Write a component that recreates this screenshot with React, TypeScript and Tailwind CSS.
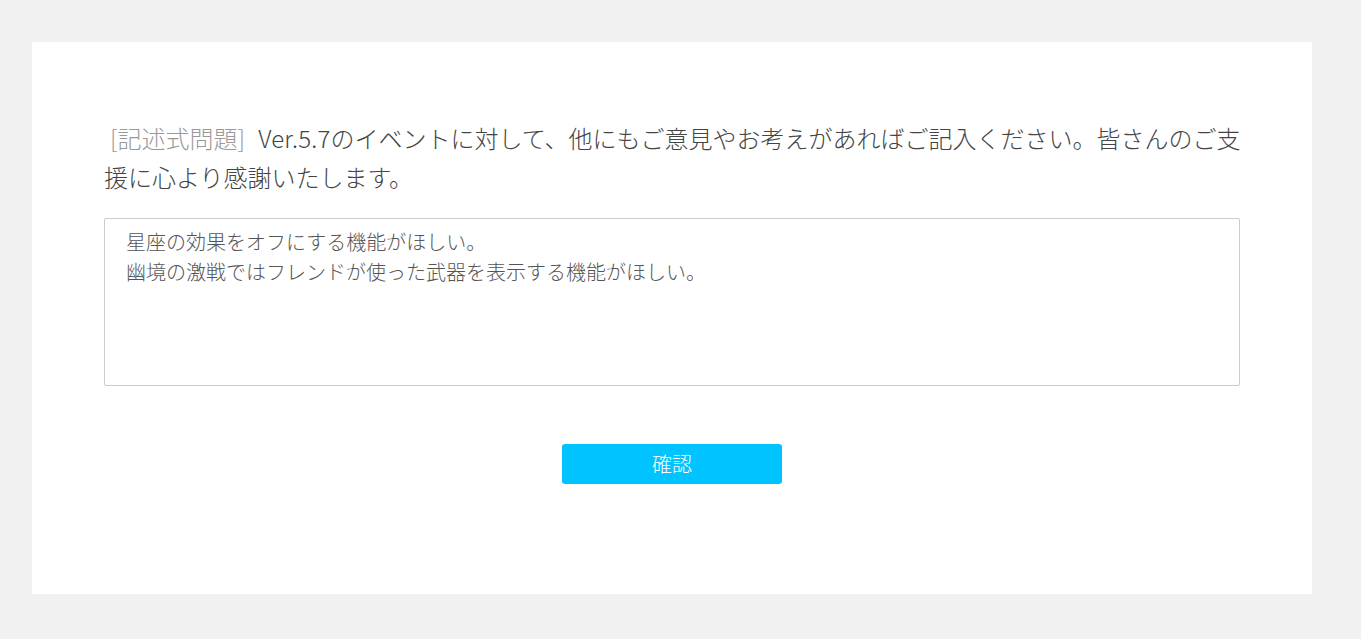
const jp = "font-['Noto_Sans_CJK_JP','Noto_Sans',sans-serif]";

export default function App() {
  return (
    <div className={`h-screen overflow-hidden bg-[#f1f1f1] pt-[42px] pl-[32px] ${jp}`}>
      <div className="flex h-[552px] w-[1280px] flex-col bg-white px-[72px] pt-[76px]">
        <p className="-mr-[10px] text-[24px] leading-[39px] font-light text-[#444]">
          <span className="ml-[6px] text-[#999]">[記述式問題]</span>
          <span className="ml-[13px] tracking-[0.2px]">Ver.5.7</span>のイベントに対して、他にもご意見やお考えがあればご記入ください。皆さんのご支援に心より感謝いたします。
        </p>
        <textarea
          className="mt-[22px] h-[168px] w-full resize-none rounded-[2px] border border-[#cccccc] px-[21px] py-[8px] text-[20px] leading-[30px] font-light text-[#555] outline-none"
          defaultValue={"星座の効果をオフにする機能がほしい。\n幽境の激戦ではフレンドが使った武器を表示する機能がほしい。"}
        />
        <div className="mt-[58px] flex justify-center">
          <button className="h-[40px] w-[220px] rounded-[3px] bg-[#00c3ff] text-[20px] font-light text-white">
            確認
          </button>
        </div>
      </div>
    </div>
  );
}
